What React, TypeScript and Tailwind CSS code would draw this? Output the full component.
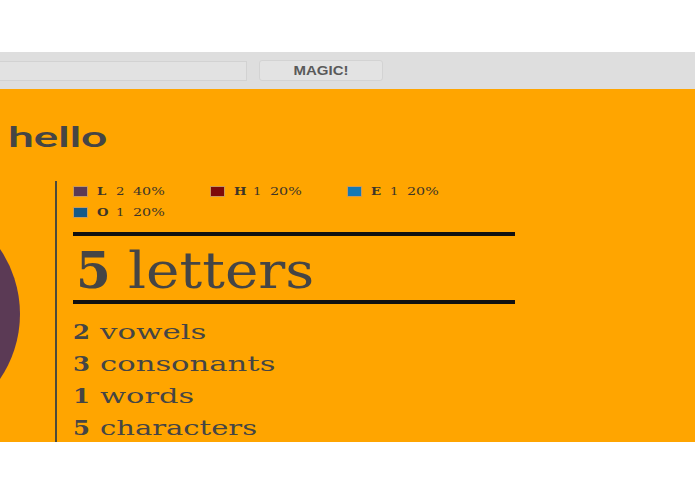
const legend = [
  { ch: 'L', n: 2, pct: '40%', color: '#5b3a55' },
  { ch: 'H', n: 1, pct: '20%', color: '#7d0a0a' },
  { ch: 'E', n: 1, pct: '20%', color: '#1479b5' },
  { ch: 'O', n: 1, pct: '20%', color: '#155a8a' },
]

// sx: horizontal stretch so the serif fallback covers the same width as the original face
const stats = [
  { n: 2, label: 'vowels', sx: 'scale-x-[1.47]' },
  { n: 3, label: 'consonants', sx: 'scale-x-[1.46]' },
  { n: 1, label: 'words', sx: 'scale-x-[1.45]' },
  { n: 5, label: 'characters', sx: 'scale-x-[1.38]' },
]

// pie slices as [start, end] in turns, 0 = 3 o'clock
function slicePath(r: number, a0: number, a1: number) {
  const p = (a: number) => [r + r * Math.cos(a * 2 * Math.PI), r + r * Math.sin(a * 2 * Math.PI)]
  const [x0, y0] = p(a0)
  const [x1, y1] = p(a1)
  const large = a1 - a0 > 0.5 ? 1 : 0
  return `M${r},${r} L${x0},${y0} A${r},${r} 0 ${large} 1 ${x1},${y1} Z`
}

function Pie() {
  const r = 116
  const slices = [
    { a0: -0.2, a1: 0.2, color: '#5b3a55' },
    { a0: 0.2, a1: 0.4, color: '#7d0a0a' },
    { a0: 0.4, a1: 0.6, color: '#1479b5' },
    { a0: 0.6, a1: 0.8, color: '#155a8a' },
  ]
  return (
    <svg width={r * 2} height={r * 2} viewBox={`0 0 ${r * 2} ${r * 2}`} className="block">
      {slices.map((s, i) => (
        <path key={i} d={slicePath(r, s.a0, s.a1)} fill={s.color} />
      ))}
    </svg>
  )
}

export default function App() {
  return (
    <div className="h-[494px] w-[695px] overflow-hidden bg-white">
      <div className="h-[52px]" />
      <div className="flex h-[37px] items-center gap-3 bg-[#dedede]">
        <div className="ml-[-40px] h-[20px] w-[287px] border border-[#d2d2d2] bg-[#e2e2e2]" />
        <button className="h-[21px] w-[124px] rounded-[3px] border border-[#d3d3d3] bg-[#e3e3e3] font-['Liberation_Sans',Arial,sans-serif] text-[12px] font-bold text-[#5a5a5a]">
          <span className="inline-block scale-x-[1.25]">MAGIC!</span>
        </button>
      </div>
      <div className="h-[353px] overflow-hidden bg-[#ffa500] text-[#454545]">
        <h1 className="px-[8px] pt-[27px] font-['Lato',sans-serif] text-[29px] font-bold leading-[40px]">
          <span className="inline-block origin-left scale-x-[1.58]">hello</span>
        </h1>
        <div className="mt-[25px] flex">
          <div className="ml-[-212px] w-[267px] shrink-0 pt-[17px]">
            <Pie />
          </div>
          <div className="w-[2px] shrink-0 self-stretch bg-[#4b4a3c]" />
          <div className="w-[458px] shrink-0 pl-[16px] font-['DejaVu_Serif',serif]">
            <div className="grid grid-cols-[137px_137px_137px]">
              {legend.map((l) => (
                <div key={l.ch} className="flex h-[21px] items-center text-[11px] leading-[21px] text-[#3d3528]">
                  <span
                    className="mr-[9px] h-[11px] w-[15px] shrink-0 border border-[#c99a5a]"
                    style={{ backgroundColor: l.color }}
                  />
                  <span className="w-[19px] font-bold">
                    <span className="inline-block origin-left scale-x-[1.2]">{l.ch}</span>
                  </span>
                  <span className="w-[17px]">
                    <span className="inline-block origin-left scale-x-[1.2]">{l.n}</span>
                  </span>
                  <span className="inline-block origin-left scale-x-[1.3]">{l.pct}</span>
                </div>
              ))}
            </div>
            <div className="mt-[9px] h-[4px] w-[442px] bg-[#111]" />
            <div className="flex h-[64px] pt-[10px] text-[50px] leading-[50px] whitespace-nowrap">
              <span className="ml-[3px] font-bold">5</span>
              <span className="ml-[17px] inline-block origin-left scale-x-[1.13]">letters</span>
            </div>
            <div className="h-[4px] w-[442px] bg-[#111]" />
            <div className="pt-[12px]">
              {stats.map((s) => (
                <div key={s.label} className="flex h-[32px] text-[21px] leading-[32px] whitespace-nowrap">
                  <span className="w-[27px] shrink-0 font-bold">
                    <span className="inline-block origin-left scale-x-[1.16]">{s.n}</span>
                  </span>
                  <span className={`inline-block origin-left ${s.sx}`}>{s.label}</span>
                </div>
              ))}
            </div>
          </div>
        </div>
      </div>
    </div>
  )
}
